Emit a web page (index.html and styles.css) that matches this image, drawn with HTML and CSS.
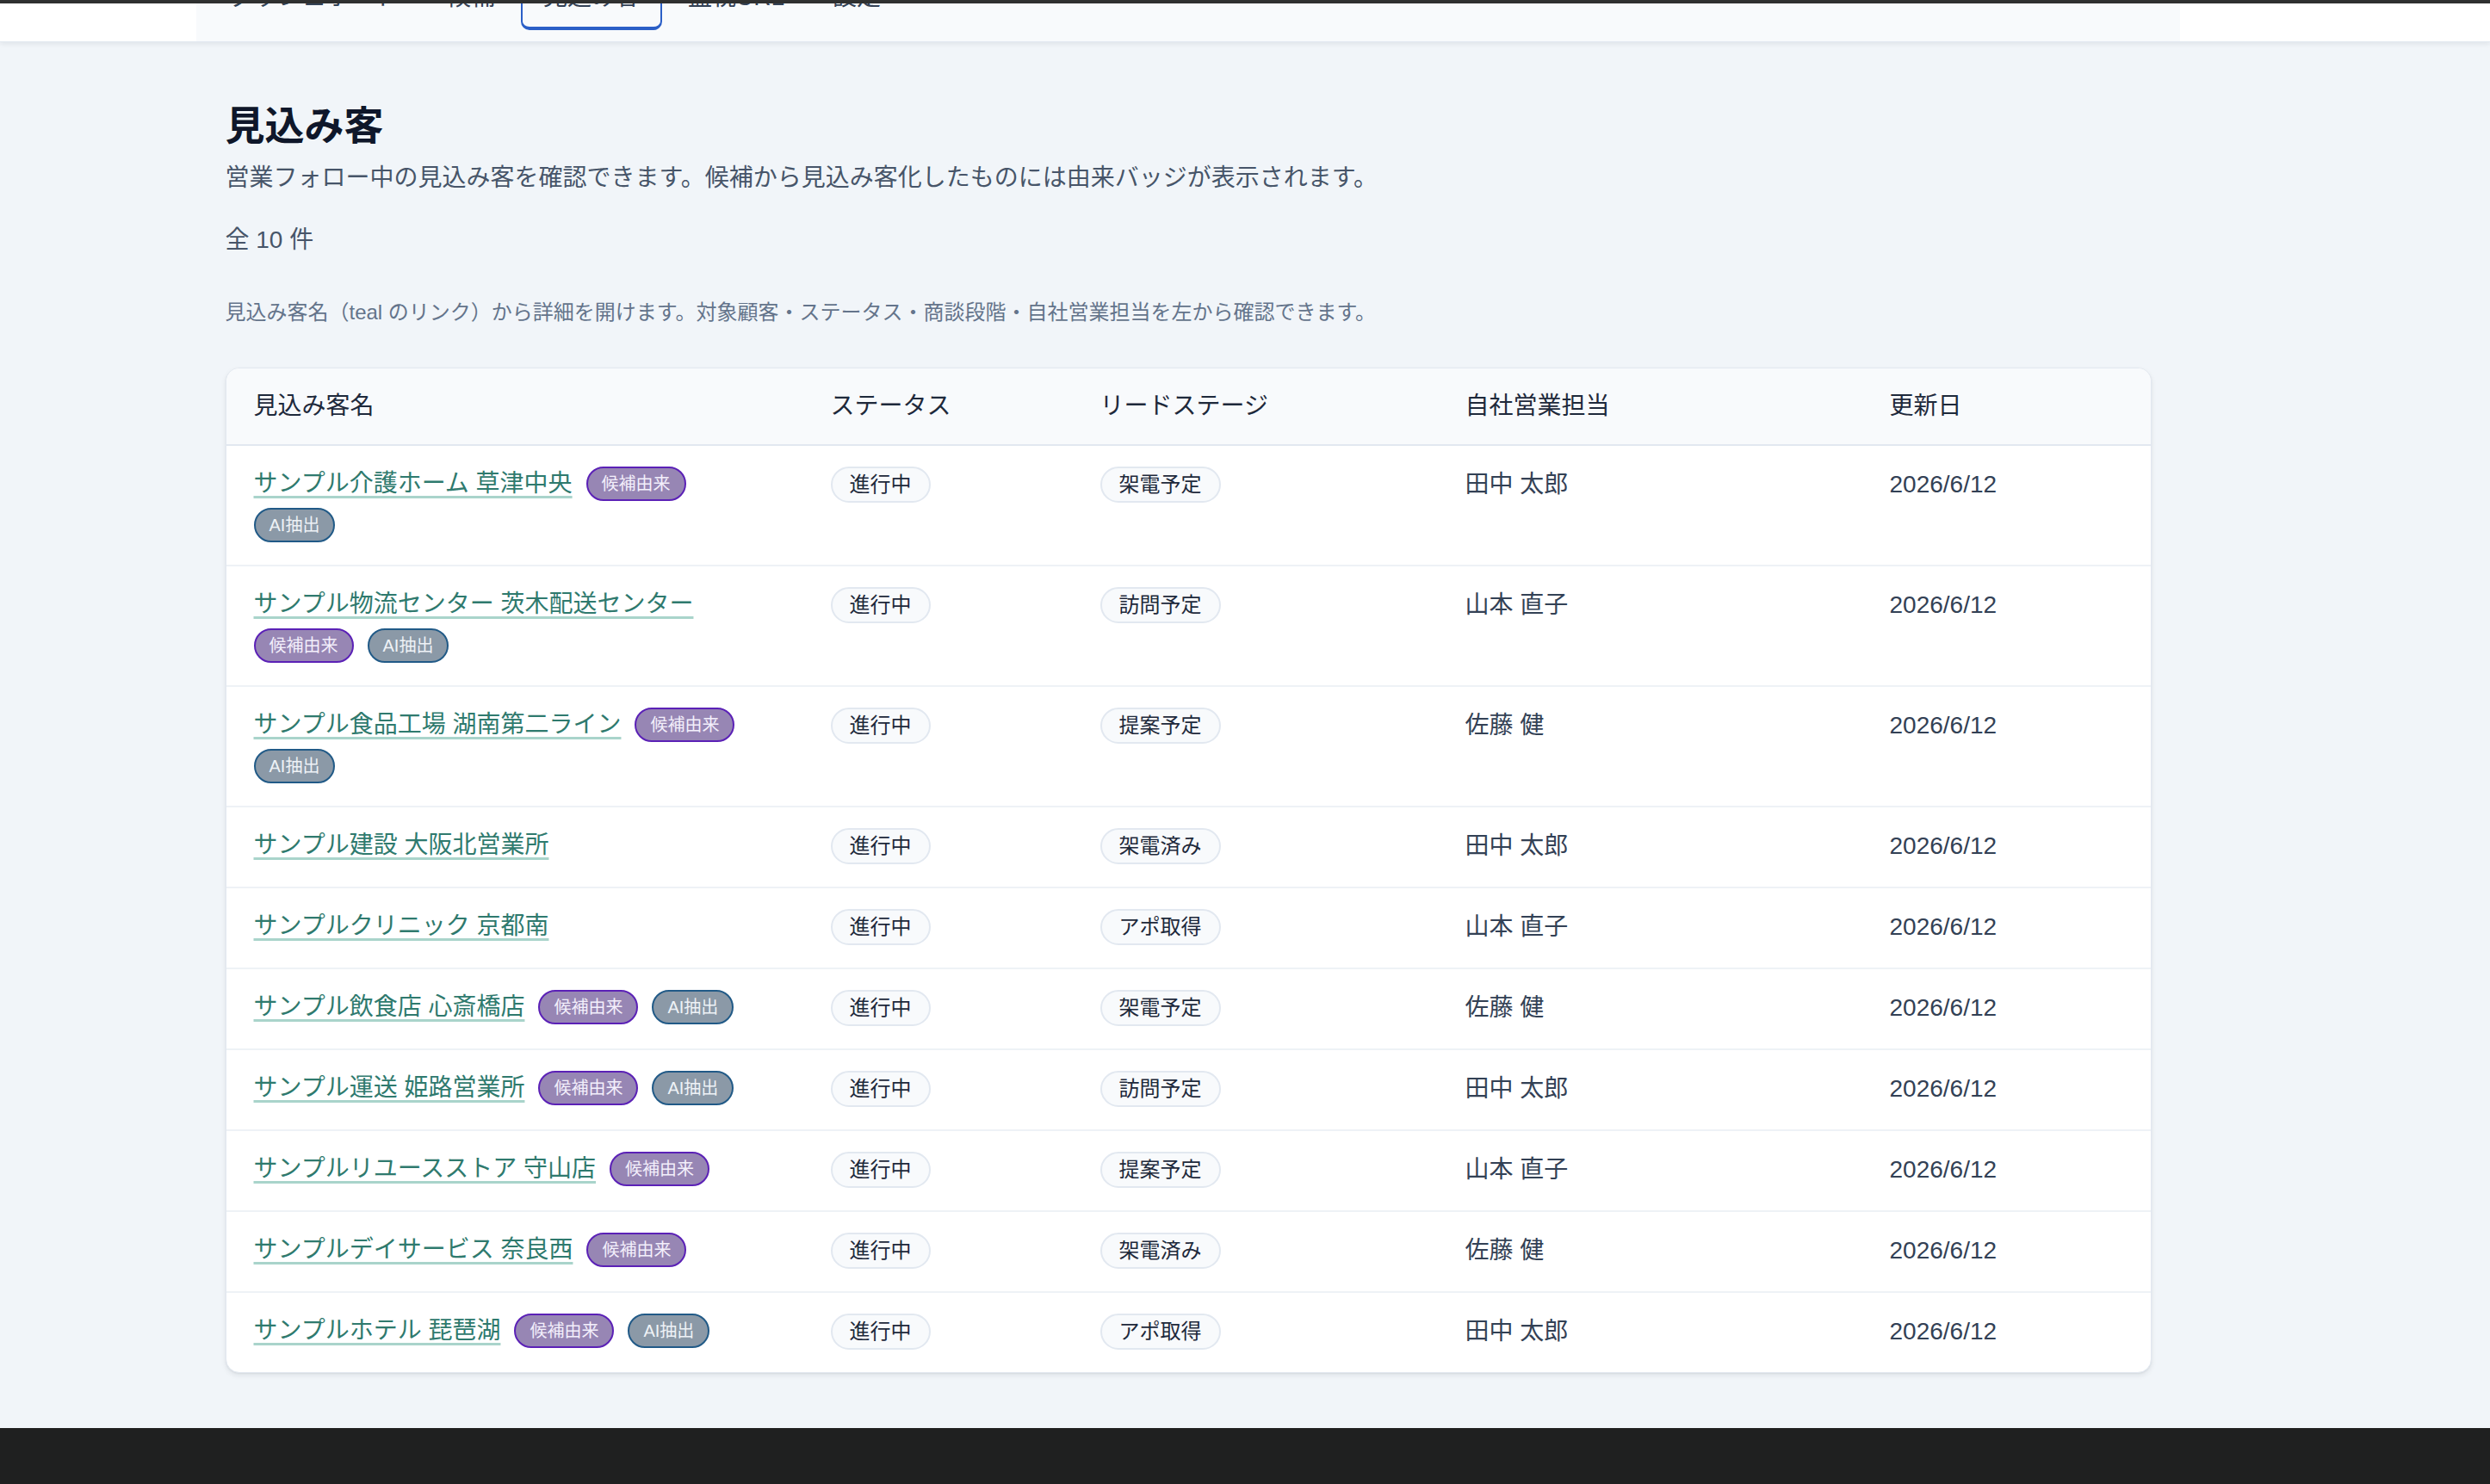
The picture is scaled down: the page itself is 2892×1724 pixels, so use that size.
FILE: index.html
```html
<!DOCTYPE html>
<html lang="ja">
<head>
<meta charset="UTF-8">
<title>見込み客</title>
<link rel="stylesheet" href="styles.css">
</head>
<body>
<div class="topbar"></div>
<header class="site_header">
	<div class="frame">
		<nav class="nav_tabs">
			<a class="nav_tab" href="#">ダッシュボード</a>
			<a class="nav_tab" href="#">候補</a>
			<a class="nav_tab active" href="#">見込み客</a>
			<a class="nav_tab" href="#">監視URL</a>
			<a class="nav_tab" href="#">設定</a>
		</nav>
	</div>
</header>

<main class="frame">
	<div class="main_content">
		<h1 class="page_title">見込み客</h1>
		<p class="page_lead">営業フォロー中の見込み客を確認できます。候補から見込み客化したものには由来バッジが表示されます。</p>
		<p class="page_count">全 10 件</p>
		<p class="page_help">見込み客名（teal のリンク）から詳細を開けます。対象顧客・ステータス・商談段階・自社営業担当を左から確認できます。</p>

		<div class="list_card">
			<table class="list_table">
				<colgroup>
					<col class="col_name">
					<col class="col_status">
					<col class="col_stage">
					<col class="col_owner">
					<col class="col_date">
				</colgroup>
				<thead>
					<tr>
						<th>見込み客名</th>
						<th>ステータス</th>
						<th>リードステージ</th>
						<th>自社営業担当</th>
						<th>更新日</th>
					</tr>
				</thead>
				<tbody>
					<tr>
						<td><div class="name_line"><a class="lead_link" href="#">サンプル介護ホーム 草津中央</a><span class="badge badge_origin">候補由来</span><span class="badge badge_ai">AI抽出</span></div></td>
						<td><span class="pill">進行中</span></td>
						<td><span class="pill">架電予定</span></td>
						<td class="plain">田中 太郎</td>
						<td class="plain">2026/6/12</td>
					</tr>
					<tr>
						<td><div class="name_line"><a class="lead_link" href="#">サンプル物流センター 茨木配送センター</a><span class="badge badge_origin">候補由来</span><span class="badge badge_ai">AI抽出</span></div></td>
						<td><span class="pill">進行中</span></td>
						<td><span class="pill">訪問予定</span></td>
						<td class="plain">山本 直子</td>
						<td class="plain">2026/6/12</td>
					</tr>
					<tr>
						<td><div class="name_line"><a class="lead_link" href="#">サンプル食品工場 湖南第二ライン</a><span class="badge badge_origin">候補由来</span><span class="badge badge_ai">AI抽出</span></div></td>
						<td><span class="pill">進行中</span></td>
						<td><span class="pill">提案予定</span></td>
						<td class="plain">佐藤 健</td>
						<td class="plain">2026/6/12</td>
					</tr>
					<tr>
						<td><div class="name_line"><a class="lead_link" href="#">サンプル建設 大阪北営業所</a></div></td>
						<td><span class="pill">進行中</span></td>
						<td><span class="pill">架電済み</span></td>
						<td class="plain">田中 太郎</td>
						<td class="plain">2026/6/12</td>
					</tr>
					<tr>
						<td><div class="name_line"><a class="lead_link" href="#">サンプルクリニック 京都南</a></div></td>
						<td><span class="pill">進行中</span></td>
						<td><span class="pill">アポ取得</span></td>
						<td class="plain">山本 直子</td>
						<td class="plain">2026/6/12</td>
					</tr>
					<tr>
						<td><div class="name_line"><a class="lead_link" href="#">サンプル飲食店 心斎橋店</a><span class="badge badge_origin">候補由来</span><span class="badge badge_ai">AI抽出</span></div></td>
						<td><span class="pill">進行中</span></td>
						<td><span class="pill">架電予定</span></td>
						<td class="plain">佐藤 健</td>
						<td class="plain">2026/6/12</td>
					</tr>
					<tr>
						<td><div class="name_line"><a class="lead_link" href="#">サンプル運送 姫路営業所</a><span class="badge badge_origin">候補由来</span><span class="badge badge_ai">AI抽出</span></div></td>
						<td><span class="pill">進行中</span></td>
						<td><span class="pill">訪問予定</span></td>
						<td class="plain">田中 太郎</td>
						<td class="plain">2026/6/12</td>
					</tr>
					<tr>
						<td><div class="name_line"><a class="lead_link" href="#">サンプルリユースストア 守山店</a><span class="badge badge_origin">候補由来</span></div></td>
						<td><span class="pill">進行中</span></td>
						<td><span class="pill">提案予定</span></td>
						<td class="plain">山本 直子</td>
						<td class="plain">2026/6/12</td>
					</tr>
					<tr>
						<td><div class="name_line"><a class="lead_link" href="#">サンプルデイサービス 奈良西</a><span class="badge badge_origin">候補由来</span></div></td>
						<td><span class="pill">進行中</span></td>
						<td><span class="pill">架電済み</span></td>
						<td class="plain">佐藤 健</td>
						<td class="plain">2026/6/12</td>
					</tr>
					<tr>
						<td><div class="name_line"><a class="lead_link" href="#">サンプルホテル 琵琶湖</a><span class="badge badge_origin">候補由来</span><span class="badge badge_ai">AI抽出</span></div></td>
						<td><span class="pill">進行中</span></td>
						<td><span class="pill">アポ取得</span></td>
						<td class="plain">田中 太郎</td>
						<td class="plain">2026/6/12</td>
					</tr>
				</tbody>
			</table>
		</div>
	</div>
</main>

<footer class="site_footer"></footer>
</body>
</html>
```

FILE: styles.css
```css
html, body { margin:0; padding:0; }
body { background:#f1f5f9; font-family:"Liberation Sans", "Noto Sans CJK JP", sans-serif; color:#334155; }

/* common centering frame for header and page body */
.frame { width:2760px; }

/* header */
.topbar { height:4px; background:#303131; }
.site_header { height:44px; background:#ffffff; border-bottom:1px solid #e2e8f0; box-shadow:0 2px 6px rgba(15,23,42,0.08); overflow:hidden; position:relative; z-index:2; }
.nav_tabs { width:2304px; height:44px; margin:0 auto; box-sizing:border-box; padding:0 0 13px 13px; background:#f8fafc; display:flex; align-items:flex-end; gap:4px; }
.nav_tab { flex:none; padding:40px 24px 13px 24px; border:2px solid transparent; border-bottom-width:4px; border-radius:10px; font-size:28px; line-height:42px; color:#334155; text-decoration:none; }
.nav_tab.active { border-color:#2b5fc7; }

/* page body */
.main_content { width:2237px; margin:0 auto; padding:70px 0 64px 0; }
.page_title { margin:0; font-size:46px; line-height:55px; font-weight:700; color:#0f172a; }
.page_lead { margin:12px 0 0 0; font-size:28px; line-height:42px; color:#475569; }
.page_count { margin:30px 0 0 0; font-size:28px; line-height:42px; color:#475569; }
.page_help { margin:45px 0 0 0; font-size:24px; line-height:36px; color:#64748b; }

/* list card */
.list_card { margin-top:46px; background:#ffffff; border:1px solid #e2e8f0; border-radius:16px; overflow:hidden; box-shadow:0 3px 6px rgba(15,23,42,0.08), 0 1px 2px rgba(15,23,42,0.06); }
.list_table { width:100%; border-collapse:collapse; table-layout:fixed; }
.col_name { width:670px; }
.col_status { width:313px; }
.col_stage { width:424px; }
.col_owner { width:493px; }
.col_date { width:335px; }

.list_table th { padding:24px 32px; background:#f8fafc; border-bottom:2px solid #e2e8f0; text-align:left; font-size:28px; line-height:40px; font-weight:400; color:#1e293b; }
.list_table td { padding:24px 32px 26px 32px; vertical-align:top; border-top:2px solid #eef2f6; }
.list_table tbody tr:first-child td { border-top:none; }
.list_table td.plain { font-size:28px; line-height:42px; color:#334155; }

.name_line { display:flex; flex-wrap:wrap; align-items:center; gap:8px 16px; }
.lead_link { font-size:28px; line-height:40px; color:#2f7a6e; text-decoration:underline; text-decoration-color:#a9d4cb; text-decoration-thickness:3px; text-underline-offset:5px; }

.badge { display:inline-block; padding:4px 16px; border:2px solid; border-radius:999px; font-size:20px; line-height:28px; white-space:nowrap; }
.badge_origin { background:#9786b4; border-color:#5b21b6; color:#f3effb; }
.badge_ai { background:#8b99a7; border-color:#215a87; color:#eef2f6; }

.pill { display:inline-block; padding:3px 20px; border:2px solid #e2e8f0; border-radius:999px; background:#f8fafc; font-size:24px; line-height:32px; color:#1e293b; white-space:nowrap; }

/* footer */
.site_footer { height:120px; background:#1f2020; }
```
